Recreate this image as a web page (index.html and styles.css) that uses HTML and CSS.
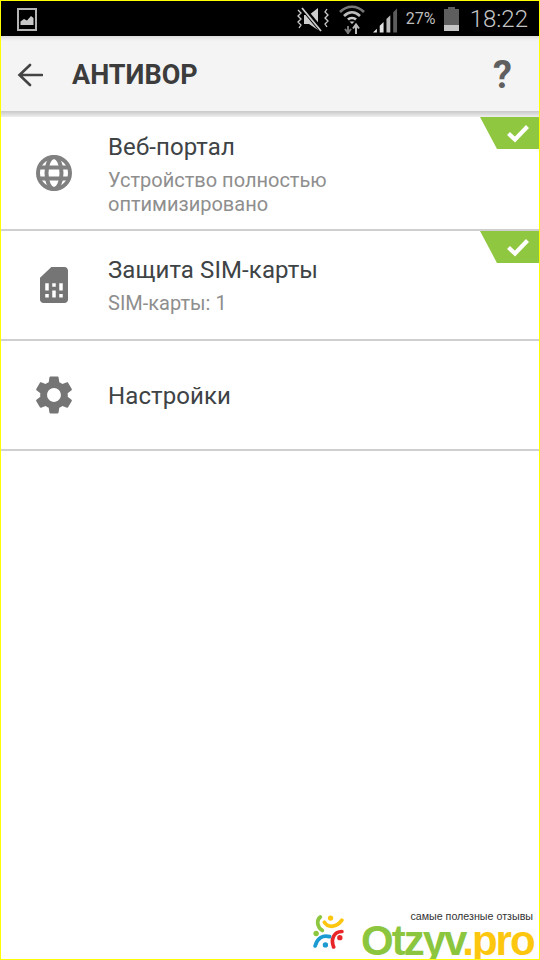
FILE: index.html
```html
<!DOCTYPE html>
<html lang="ru">
<head>
<meta charset="utf-8">
<title>Антивор</title>
<link rel="stylesheet" href="styles.css">
</head>
<body>
<div class="frame">
  <div class="statusbar">
    <svg class="st-image" viewBox="0 0 20 23"><rect x="1" y="1" width="18" height="21" fill="none" stroke="#b4b4b4" stroke-width="2"/><path d="M3.500 17V13.500L7 11L10 12.500L14 8L16.500 10V17Z" fill="#c8c8c8"/></svg>
    <div class="st-right">
      <svg class="st-mute" viewBox="0 0 34 26"><path d="M2 4l3 3-3 3 3 3-3 3 3 3-2 3M31 3l-2 3 3 3-3 3 3 3-3 3 2 3" fill="none" stroke="#ccc" stroke-width="1.300"/><path d="M8 9h5l9-7v22L13 18H8Z" fill="#ccc"/><path d="M6 1L26 25" stroke="#000" stroke-width="5"/><path d="M6 2L25 25" stroke="#ccc" stroke-width="1.800"/></svg>
      <svg class="st-wifi" viewBox="0 0 26 30"><g fill="none" stroke-width="2.600"><path d="M1 8C8 1 18 1 25 8" stroke="#777"/><path d="M5 12C10 7 16 7 21 12" stroke="#bbb"/><path d="M9 15.500C11 13.500 15 13.500 17 15.500" stroke="#ccc"/></g><path d="M10.500 17.500L13 20L15.500 17.500Z" fill="#ccc"/><path d="M9 30v-8M6 25l3 4 3-4" fill="none" stroke="#777" stroke-width="2"/><path d="M17 30v-9M14 24.500l3-4 3 4" fill="none" stroke="#bbb" stroke-width="2"/></svg>
      <svg class="st-signal" viewBox="0 0 26 26"><path d="M0 26L4 22V26Z" fill="#e4e4e4"/><path d="M7 26V19L11 15V26Z" fill="#e4e4e4"/><path d="M14 26V12L18 8V26Z" fill="#bbb"/><path d="M21 26V5L25 1V26Z" fill="#5c5c5c"/></svg>
      <span class="st-pct">27%</span>
      <svg class="st-batt" viewBox="0 0 15 24"><path d="M4 0h7v2h4v22H0V2h4Z" fill="#5e5e5e"/><rect y="18" width="15" height="6" fill="#c4c4c4"/></svg>
      <span class="st-time">18:22</span>
    </div>
  </div>

  <header class="appbar">
    <svg class="back" viewBox="0 0 26 24"><path d="M25 12H3M13 2L2.500 12L13 22" fill="none" stroke="#444" stroke-width="2.600" stroke-linecap="round"/></svg>
    <h1 class="title">АНТИВОР</h1>
    <span class="help">?</span>
  </header>
  <div class="appbar-shadow"></div>

  <main class="list">
    <section class="row row-first">
      <div class="icon-cell">
        <svg class="ic-globe" viewBox="0 0 36 36"><g fill="none" stroke="#808080" stroke-width="4"><circle cx="18" cy="18" r="16"/><ellipse cx="18" cy="18" rx="7.500" ry="16"/><path d="M3 12.500H33M3 23.500H33"/></g></svg>
      </div>
      <div class="texts">
        <div class="name">Веб-портал</div>
        <div class="sub">Устройство полностью<br>оптимизировано</div>
      </div>
      <div class="badge"><svg class="tick" viewBox="0 0 24 20"><path d="M2.500 10.500L9 16.500L21.500 3.500" fill="none" stroke="#fff" stroke-width="4.200"/></svg></div>
    </section>
    <section class="row row-second">
      <div class="icon-cell">
        <svg class="ic-sim" viewBox="4 2 16 20" preserveAspectRatio="none"><path d="M19.990 4c0-1.100-.890-2-1.990-2h-7.500L4 8v12c0 1.100.900 2 2 2h12c1.100 0 2-.900 2-2l-.010-16zM9 19H7v-2h2v2zm8 0h-2v-2h2v2zm-8-4H7v-4h2v4zm4 4h-2v-4h2v4zm0-6h-2v-2h2v2zm4 2h-2v-4h2v4z" fill="#757575"/></svg>
      </div>
      <div class="texts">
        <div class="name">Защита SIM-карты</div>
        <div class="sub">SIM-карты: 1</div>
      </div>
      <div class="badge"><svg class="tick" viewBox="0 0 24 20"><path d="M2.500 10.500L9 16.500L21.500 3.500" fill="none" stroke="#fff" stroke-width="4.200"/></svg></div>
    </section>
    <section class="row row-third">
      <div class="icon-cell">
        <svg class="ic-gear" viewBox="0 0 24 24"><path d="M19.140 12.940c.040-.300.060-.610.060-.940 0-.320-.020-.640-.070-.940l2.030-1.580c.180-.140.230-.410.120-.610l-1.920-3.320c-.120-.220-.370-.290-.590-.220l-2.390.960c-.500-.380-1.030-.700-1.620-.940l-.360-2.540c-.040-.240-.240-.410-.480-.410h-3.840c-.240 0-.430.170-.470.410l-.360 2.540c-.590.240-1.130.570-1.620.940l-2.390-.960c-.220-.080-.470 0-.590.220L2.740 8.870c-.120.210-.080.470.120.610l2.030 1.580c-.050.300-.090.630-.090.940s.020.640.070.940l-2.030 1.580c-.180.140-.230.410-.120.610l1.920 3.320c.120.220.370.290.590.220l2.390-.960c.500.380 1.030.700 1.620.940l.360 2.540c.050.240.240.410.480.410h3.840c.240 0 .440-.170.470-.410l.360-2.540c.590-.240 1.130-.560 1.620-.940l2.390.960c.220.080.470 0 .590-.220l1.920-3.320c.120-.220.070-.470-.120-.610l-2.010-1.580zM12 15.600c-1.980 0-3.600-1.620-3.600-3.600s1.620-3.600 3.600-3.600 3.600 1.620 3.600 3.600-1.620 3.600-3.600 3.600z" fill="#757575"/></svg>
      </div>
      <div class="texts">
        <div class="name">Настройки</div>
      </div>
    </section>
  </main>

  <footer class="watermark">
    <svg class="wm-logo" viewBox="0 0 30 33">
      <g fill="none" stroke-width="3.600" stroke-linecap="round">
        <path d="M7 2C3 5 4 12 9 15" stroke="#8dc63f"/>
        <path d="M11 7C15 13 23 12 28 5" stroke="#fdc70f"/>
        <path d="M20 31C17 24 20 16 28 16" stroke="#e8262a"/>
        <path d="M2 30C4 23 9 19 16 21" stroke="#1b9bd1"/>
      </g>
      <circle cx="3" cy="18" r="2.600" fill="#8dc63f"/>
      <circle cx="17" cy="3" r="2.600" fill="#fdc70f"/>
      <circle cx="26" cy="22" r="2.600" fill="#e8262a"/>
      <circle cx="12" cy="29" r="2.600" fill="#1b9bd1"/>
    </svg>
    <div class="wm-text">
      <div class="wm-tag">самые полезные отзывы</div>
      <div class="wm-brand"><span class="wm-green">Otzyv</span><span class="wm-yellow">.pro</span></div>
    </div>
  </footer>
</div>
</body>
</html>
```

FILE: styles.css
```css
* { box-sizing: border-box; }
html, body { margin: 0; padding: 0; }
body { background: #fff; font-family: Roboto, "Liberation Sans", sans-serif; }

.frame {
  width: 540px;
  height: 960px;
  border: 1px solid #ffff00;
  display: flex;
  flex-direction: column;
  overflow: hidden;
  background: #fff;
}

.statusbar {
  height: 35px;
  flex: none;
  background: #000;
  display: flex;
  align-items: center;
  justify-content: space-between;
  padding: 0 11px 0 16px;
}
.statusbar svg { display: block; }
.st-image { width: 20px; height: 23px; margin-top: 1px; }
.st-right { display: flex; align-items: center; }
.st-mute { width: 34px; height: 26px; margin-right: 9px; }
.st-wifi { width: 26px; height: 30px; margin-right: 8px; }
.st-signal { width: 25px; height: 26px; margin-right: 8px; margin-top: 2px; }
.st-pct { color: #bdbdbd; font-size: 16px; width: 35px; }
.st-batt { width: 15px; height: 24px; margin: 0 11px 0 3px; }
.st-time { color: #c4c4c4; font-size: 24px; font-weight: 300; }

.appbar {
  height: 75px;
  flex: none;
  background: linear-gradient(#dcdcdc, #f4f4f4 5px);
  display: flex;
  align-items: center;
  padding: 3px 27px 0 16px;
}
.back { width: 26px; height: 24px; flex: none; margin-top: -1px; }
.title {
  margin: 0 0 0 29px;
  flex: 1;
  font-size: 27px;
  font-weight: 700;
  color: #3c3c3c;
}
.help { font-size: 38px; font-weight: 700; color: #5f5f5f; line-height: 1; }
.appbar-shadow { height: 6px; flex: none; background: linear-gradient(#c8c8c8, #eeeeee); }

.list { flex: none; background: #fff; }
.row {
  position: relative;
  display: flex;
  align-items: center;
  border-bottom: 2px solid #cfcfcf;
}
.row-first { height: 114px; }
.row-first .texts { padding-top: 3px; }
.row-second { height: 110px; }
.row-third { height: 110px; }
.icon-cell {
  width: 107px;
  flex: none;
  display: flex;
  justify-content: center;
  padding-right: 2px;
}
.icon-cell svg { display: block; }
.ic-globe { width: 36px; height: 36px; }
.ic-sim { width: 28px; height: 36px; }
.ic-gear { width: 46px; height: 46px; }
.texts { padding-top: 1px; }
.name { font-size: 24px; letter-spacing: .1px; color: #3e4345; line-height: 28px; }
.sub { font-size: 20px; color: #8e8e8e; line-height: 24px; margin-top: 7px; }

.badge {
  position: absolute;
  top: 0;
  right: 0;
  width: 59px;
  height: 32px;
  background: #8fc741;
  clip-path: polygon(0 0, 100% 0, 100% 100%, 17px 100%);
  display: flex;
  align-items: center;
  justify-content: flex-end;
  padding-right: 9px;
}
.tick { width: 24px; height: 20px; display: block; }

.watermark {
  margin-top: auto;
  display: flex;
  align-items: flex-start;
  justify-content: flex-end;
  height: 50px;
}
.wm-logo { width: 31px; height: 34px; margin: 6px 17px 0 0; display: block; }
.wm-text { width: 178px; }
.wm-tag { font-family: "Liberation Sans", sans-serif; font-size: 10.700px; color: #333; text-align: right; padding-right: 6px; line-height: 11px; margin-top: 2px; }
.wm-brand { font-family: "Liberation Sans", sans-serif; font-weight: 700; font-size: 42px; letter-spacing: -2px; line-height: 37px; white-space: nowrap; }
.wm-green { color: #8cc63f; }
.wm-yellow { color: #fdc70f; }
```
